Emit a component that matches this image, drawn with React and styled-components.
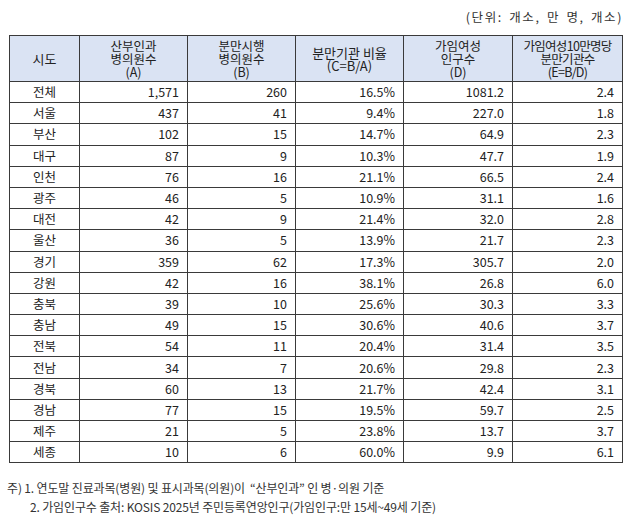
import React from "react"
import styled, { createGlobalStyle } from "styled-components"

const GlobalStyle = createGlobalStyle`
  body {
    margin: 0;
    background: #ffffff;
    font-family: "Noto Sans CJK KR", "Noto Sans", sans-serif;
    color: #222222;
  }
`

const Page = styled.div`
  width: 630px;
  height: 521px;
  padding-left: 9px;
  box-sizing: border-box;
  overflow: hidden;
`

const UnitLine = styled.div`
  width: 614px;
  height: 35px;
  display: flex;
  justify-content: flex-end;
  align-items: center;
  padding-bottom: 2px;
  box-sizing: border-box;
  font-size: 12.5px;
  letter-spacing: 1.6px;
  word-spacing: 2px;
  color: #333333;
`

const Table = styled.table`
  width: 613px;
  border-collapse: collapse;
  table-layout: fixed;
  font-size: 12.5px;
`

const HeadRow = styled.tr`
  height: 46px;
  background: #dae3f3;
`

const HeadCell = styled.th`
  border: 1px solid #3a3a3a;
  font-weight: 400;
  font-size: ${props => (props.$big ? "13px" : "12.5px")};
  line-height: 13px;
  padding: 0 2px;
  text-align: center;
  vertical-align: middle;
  letter-spacing: ${props => (props.$tight ? "-0.7px" : "0")};
`

const Row = styled.tr`
  height: 21.2px;
`

const Cell = styled.td`
  border: 1px solid #3a3a3a;
  padding: 0 ${props => (props.$center ? "0" : "8px")} 0 0;
  text-align: ${props => (props.$center ? "center" : "right")};
  line-height: 18px;
  white-space: nowrap;
`

const Notes = styled.div`
  margin-top: 15px;
  margin-left: -2px;
  font-size: 12px;
  letter-spacing: -0.15px;
  line-height: 19px;
  color: #333333;
`

const NoteLine = styled.div`
  padding-left: ${props => props.$indent || 0}px;
  white-space: nowrap;
`

const rows = [
  ["전체", "1,571", "260", "16.5%", "1081.2", "2.4"],
  ["서울", "437", "41", "9.4%", "227.0", "1.8"],
  ["부산", "102", "15", "14.7%", "64.9", "2.3"],
  ["대구", "87", "9", "10.3%", "47.7", "1.9"],
  ["인천", "76", "16", "21.1%", "66.5", "2.4"],
  ["광주", "46", "5", "10.9%", "31.1", "1.6"],
  ["대전", "42", "9", "21.4%", "32.0", "2.8"],
  ["울산", "36", "5", "13.9%", "21.7", "2.3"],
  ["경기", "359", "62", "17.3%", "305.7", "2.0"],
  ["강원", "42", "16", "38.1%", "26.8", "6.0"],
  ["충북", "39", "10", "25.6%", "30.3", "3.3"],
  ["충남", "49", "15", "30.6%", "40.6", "3.7"],
  ["전북", "54", "11", "20.4%", "31.4", "3.5"],
  ["전남", "34", "7", "20.6%", "29.8", "2.3"],
  ["경북", "60", "13", "21.7%", "42.4", "3.1"],
  ["경남", "77", "15", "19.5%", "59.7", "2.5"],
  ["제주", "21", "5", "23.8%", "13.7", "3.7"],
  ["세종", "10", "6", "60.0%", "9.9", "6.1"]
]

const App = () => (
  <Page>
    <GlobalStyle />
    <UnitLine>(단위: 개소, 만 명, 개소)</UnitLine>
    <Table>
      <colgroup>
        <col style={{ width: 70 }} />
        <col style={{ width: 108 }} />
        <col style={{ width: 108 }} />
        <col style={{ width: 108 }} />
        <col style={{ width: 109 }} />
        <col style={{ width: 110 }} />
      </colgroup>
      <thead>
        <HeadRow>
          <HeadCell $big>시도</HeadCell>
          <HeadCell>산부인과<br />병의원수<br />(A)</HeadCell>
          <HeadCell>분만시행<br />병의원수<br />(B)</HeadCell>
          <HeadCell $big>분만기관 비율<br />(C=B/A)</HeadCell>
          <HeadCell>가임여성<br />인구수<br />(D)</HeadCell>
          <HeadCell $tight>가임여성10만명당<br />분만기관수<br />(E=B/D)</HeadCell>
        </HeadRow>
      </thead>
      <tbody>
        {rows.map(row => (
          <Row key={row[0]}>
            <Cell $center>{row[0]}</Cell>
            {row.slice(1).map((value, i) => (
              <Cell key={i}>{value}</Cell>
            ))}
          </Row>
        ))}
      </tbody>
    </Table>
    <Notes>
      <NoteLine>주) 1. 연도말 진료과목(병원) 및 표시과목(의원)이 &nbsp;“산부인과” 인 병·의원 기준</NoteLine>
      <NoteLine $indent={23}>2. 가임인구수 출처: KOSIS 2025년 주민등록연앙인구(가임인구:만 15세~49세 기준)</NoteLine>
    </Notes>
  </Page>
)

export default App
